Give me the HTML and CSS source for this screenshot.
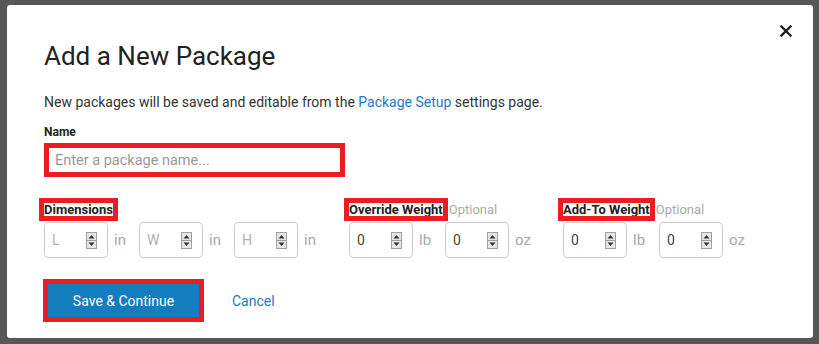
FILE: index.html
```html
<!DOCTYPE html>
<html lang="en">
<head>
    <meta charset="UTF-8">
    <meta name="viewport" content="width=device-width, initial-scale=1.0">
    <title>Add a New Package</title>
    <link rel="stylesheet" href="styles.css">
</head>
<body>
    <div class="modal">
        <button class="close" aria-label="Close">
            <svg width="12" height="12" viewBox="0 0 12 12"><path d="M1.5 1.5 L10.5 10.5 M10.5 1.5 L1.5 10.5" stroke="#222" stroke-width="2.4" stroke-linecap="square"/></svg>
        </button>
        <h1 class="title">Add a New Package</h1>
        <p class="intro">New packages will be saved and editable from the <a href="#" class="link">Package Setup</a> settings page.</p>

        <div class="field-label">Name</div>
        <div class="name-input">Enter a package name...</div>

        <div class="measure-row">
            <div class="group">
                <div class="group-head"><span class="mark">Dimensions</span></div>
                <div class="group-fields">
                    <div class="cell"><div class="num"><span class="ph">L</span><svg class="spin" width="11" height="17" viewBox="0 0 11 17"><rect x="0.5" y="0.5" width="10" height="16" fill="#e6e6e6" stroke="#a0a0a0"/><line x1="1" y1="8.5" x2="10" y2="8.5" stroke="#a0a0a0"/><path d="M5.5 3 L8.5 6.5 L2.5 6.5 Z" fill="#333"/><path d="M5.5 14 L8.5 10.5 L2.5 10.5 Z" fill="#333"/></svg></div><span class="unit">in</span></div>
                    <div class="cell"><div class="num"><span class="ph">W</span><svg class="spin" width="11" height="17" viewBox="0 0 11 17"><rect x="0.5" y="0.5" width="10" height="16" fill="#e6e6e6" stroke="#a0a0a0"/><line x1="1" y1="8.5" x2="10" y2="8.5" stroke="#a0a0a0"/><path d="M5.5 3 L8.5 6.5 L2.5 6.5 Z" fill="#333"/><path d="M5.5 14 L8.5 10.5 L2.5 10.5 Z" fill="#333"/></svg></div><span class="unit">in</span></div>
                    <div class="cell"><div class="num"><span class="ph">H</span><svg class="spin" width="11" height="17" viewBox="0 0 11 17"><rect x="0.5" y="0.5" width="10" height="16" fill="#e6e6e6" stroke="#a0a0a0"/><line x1="1" y1="8.5" x2="10" y2="8.5" stroke="#a0a0a0"/><path d="M5.5 3 L8.5 6.5 L2.5 6.5 Z" fill="#333"/><path d="M5.5 14 L8.5 10.5 L2.5 10.5 Z" fill="#333"/></svg></div><span class="unit">in</span></div>
                </div>
            </div>
            <div class="group">
                <div class="group-head"><span class="mark">Override Weight</span><span class="optional">Optional</span></div>
                <div class="group-fields">
                    <div class="cell"><div class="num"><span class="val">0</span><svg class="spin" width="11" height="17" viewBox="0 0 11 17"><rect x="0.5" y="0.5" width="10" height="16" fill="#e6e6e6" stroke="#a0a0a0"/><line x1="1" y1="8.5" x2="10" y2="8.5" stroke="#a0a0a0"/><path d="M5.5 3 L8.5 6.5 L2.5 6.5 Z" fill="#333"/><path d="M5.5 14 L8.5 10.5 L2.5 10.5 Z" fill="#333"/></svg></div><span class="unit">lb</span></div>
                    <div class="cell"><div class="num"><span class="val">0</span><svg class="spin" width="11" height="17" viewBox="0 0 11 17"><rect x="0.5" y="0.5" width="10" height="16" fill="#e6e6e6" stroke="#a0a0a0"/><line x1="1" y1="8.5" x2="10" y2="8.5" stroke="#a0a0a0"/><path d="M5.5 3 L8.5 6.5 L2.5 6.5 Z" fill="#333"/><path d="M5.5 14 L8.5 10.5 L2.5 10.5 Z" fill="#333"/></svg></div><span class="unit">oz</span></div>
                </div>
            </div>
            <div class="group group-last">
                <div class="group-head"><span class="mark">Add-To Weight</span><span class="optional">Optional</span></div>
                <div class="group-fields">
                    <div class="cell"><div class="num"><span class="val">0</span><svg class="spin" width="11" height="17" viewBox="0 0 11 17"><rect x="0.5" y="0.5" width="10" height="16" fill="#e6e6e6" stroke="#a0a0a0"/><line x1="1" y1="8.5" x2="10" y2="8.5" stroke="#a0a0a0"/><path d="M5.5 3 L8.5 6.5 L2.5 6.5 Z" fill="#333"/><path d="M5.5 14 L8.5 10.5 L2.5 10.5 Z" fill="#333"/></svg></div><span class="unit">lb</span></div>
                    <div class="cell"><div class="num"><span class="val">0</span><svg class="spin" width="11" height="17" viewBox="0 0 11 17"><rect x="0.5" y="0.5" width="10" height="16" fill="#e6e6e6" stroke="#a0a0a0"/><line x1="1" y1="8.5" x2="10" y2="8.5" stroke="#a0a0a0"/><path d="M5.5 3 L8.5 6.5 L2.5 6.5 Z" fill="#333"/><path d="M5.5 14 L8.5 10.5 L2.5 10.5 Z" fill="#333"/></svg></div><span class="unit">oz</span></div>
                </div>
            </div>
        </div>

        <div class="actions">
            <button class="btn">Save &amp; Continue</button>
            <a href="#" class="link cancel">Cancel</a>
        </div>
    </div>
</body>
</html>
```

FILE: styles.css
```css
:root{
    --mark-red:#ed1c24;
    --link-blue:#1a7cc4;
    --btn-blue:#137dc0;
}
*{
    box-sizing: border-box;
}
body{
    margin: 0;
    padding: 5px 0 0 7px;
    background-color: #575757;
    font-family: Roboto, "Liberation Sans", sans-serif;
    color: #222;
    height: 344px;
    overflow: hidden;
}
.modal{
    position: relative;
    width: 806px;
    height: 333px;
    background-color: #fff;
    border-radius: 3px;
    padding: 36px 0 0 37px;
}
.close{
    position: absolute;
    top: 20px;
    right: 21px;
    border: 0;
    background: none;
    padding: 0;
    width: 12px;
    height: 12px;
    cursor: pointer;
}
.close svg{
    display: block;
}
.title{
    margin: 0;
    font-size: 26px;
    line-height: 30px;
    font-weight: 400;
    color: #222;
}
.intro{
    margin: 21px 0 0;
    font-size: 14px;
    line-height: 20px;
    color: #333;
}
.link{
    color: var(--link-blue);
    text-decoration: none;
}
.field-label{
    margin-top: 12px;
    font-size: 12px;
    line-height: 16px;
    font-weight: 700;
    color: #222;
}
.name-input{
    margin-top: 3px;
    width: 301px;
    height: 34px;
    border: 5px solid var(--mark-red);
    padding: 0 6px;
    font-size: 14.5px;
    line-height: 25px;
    color: #999;
}
.measure-row{
    display: flex;
    margin-top: 26px;
    gap: 20px;
}
.group-last{
    margin-left: 2px;
}
.group-head{
    display: flex;
    align-items: baseline;
    height: 19px;
    font-size: 13px;
    line-height: 13px;
}
.mark{
    font-weight: 700;
    color: #222;
    outline: 5px solid var(--mark-red);
    outline-offset: 0;
    margin-right: 6px;
}
.optional{
    color: #aaa;
}
.group-fields{
    display: flex;
}
.cell{
    width: 95px;
    display: flex;
    align-items: center;
}
.group + .group .cell{
    width: 96px;
}
.num{
    width: 64px;
    height: 36px;
    border: 1px solid #ccc;
    border-radius: 4px;
    display: flex;
    align-items: center;
    justify-content: space-between;
    padding: 0 10px 0 7px;
    font-size: 14px;
}
.ph{
    color: #b0b0b0;
}
.val{
    color: #444;
}
.spin{
    display: block;
}
.unit{
    margin-left: 6px;
    font-size: 15px;
    color: #a8a8a8;
}
.actions{
    display: flex;
    align-items: center;
    margin-top: 21px;
    gap: 28px;
}
.btn{
    width: 161px;
    height: 43px;
    border: 5px solid var(--mark-red);
    background-color: var(--btn-blue);
    color: #fff;
    font-family: inherit;
    font-size: 14px;
    padding: 0;
    margin-left: -1px;
    cursor: pointer;
}
.cancel{
    font-size: 14px;
}
```
